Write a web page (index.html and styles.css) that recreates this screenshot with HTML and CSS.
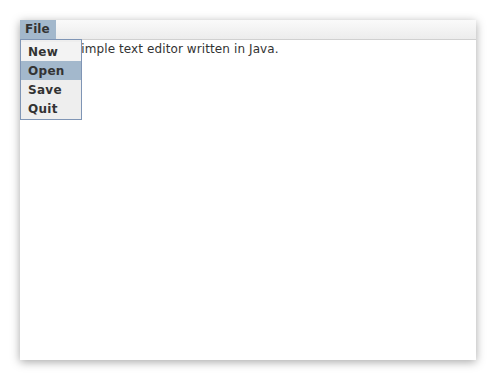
FILE: index.html
```html
<!DOCTYPE html>
<html>
    <head>
        <meta charset="utf-8">
        <title>Simple Editor</title>
        <link rel="stylesheet" href="styles.css">
    </head>
    <body>
        <div class="frame">
            <div class="menubar">
                <span class="menu active">File</span>
            </div>
            <div class="editor">This is a simple text editor written in Java.</div>
            <ul class="popup">
                <li>New</li>
                <li class="selected">Open</li>
                <li>Save</li>
                <li>Quit</li>
            </ul>
        </div>
    </body>
</html>
```

FILE: styles.css
```css
body {
    margin: 0;
    padding: 20px;
    background: #fff;
    font: 12px "DejaVu Sans", sans-serif;
    color: #222;
}
.frame {
    width: 456px;
    height: 340px;
    position: relative;
    display: flex;
    flex-direction: column;
    background: #fff;
    box-shadow: 0 2px 9px rgba(0, 0, 0, 0.35);
}
.menubar {
    height: 19px;
    display: flex;
    background: linear-gradient(#fafafa, #ececec);
    border-bottom: 1px solid #d0d0d0;
}
.menu {
    padding: 0 5px;
    line-height: 19px;
    font-weight: bold;
    font-size: 12px;
    color: #333;
}
.menu.active {
    background: #a3b8cc;
    width: 26px;
}
.editor {
    flex: 1;
    padding: 2px 1px;
    line-height: 15px;
    letter-spacing: 0.1px;
    color: #333;
}
.popup {
    position: absolute;
    top: 19px;
    left: 0;
    width: 60px;
    margin: 0;
    padding: 2px 0 1px;
    list-style: none;
    background: #eeeeee;
    border: 1px solid #7f95b5;
}
.popup li {
    height: 19px;
    line-height: 21px;
    padding-left: 7px;
    font-weight: bold;
    font-size: 12px;
    letter-spacing: 0.3px;
    color: #333;
}
.popup li:first-child {
    background: #f3f3f3;
}
.popup li.selected {
    background: #a3b8cc;
}
```
